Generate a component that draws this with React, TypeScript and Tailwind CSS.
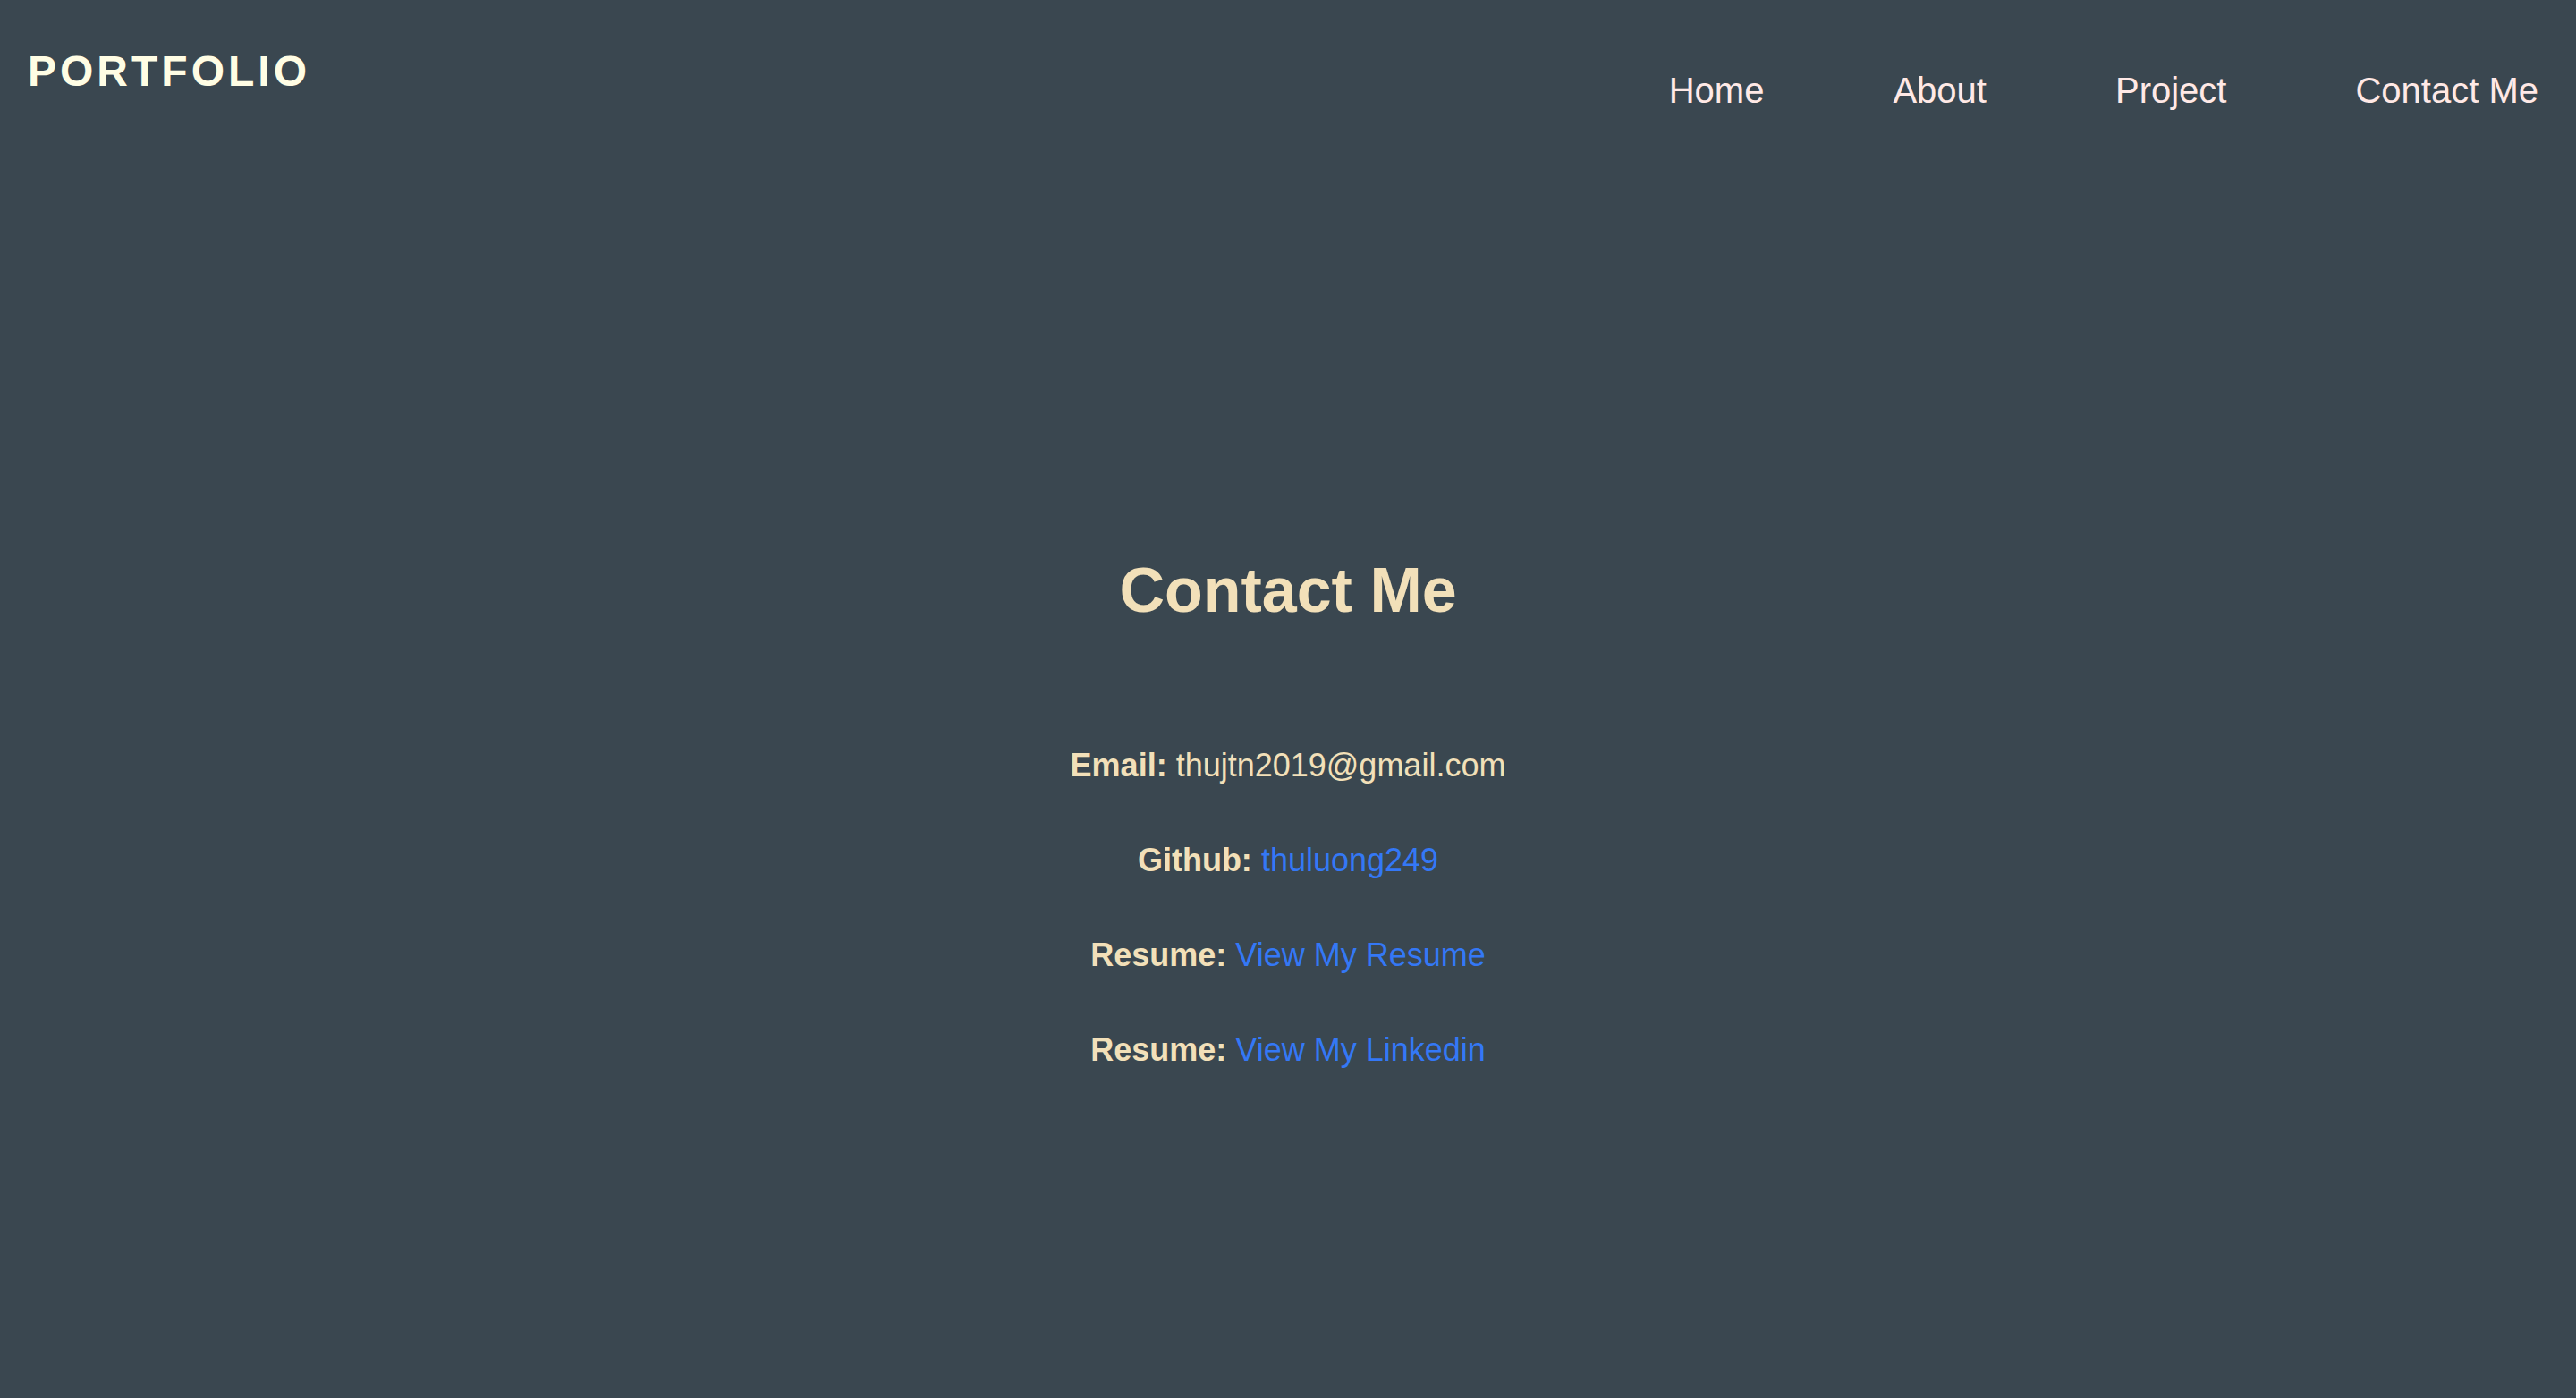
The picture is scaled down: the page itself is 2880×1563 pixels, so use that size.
const contacts = [
  { label: "Email:", value: "thujtn2019@gmail.com", link: false },
  { label: "Github:", value: "thuluong249", link: true },
  { label: "Resume:", value: "View My Resume", link: true },
  { label: "Resume:", value: "View My Linkedin", link: true },
];

const navItems = ["Home", "About", "Project", "Contact Me"];

export default function App() {
  return (
    <div className="min-h-screen bg-[#3a4750] font-['Liberation_Sans',Arial,sans-serif]">
      <header className="flex items-start justify-between">
        <a
          href="#"
          className="mt-[56px] pl-[31px] text-[48px] leading-none font-bold tracking-[4px] text-[#fffde4]"
        >
          PORTFOLIO
        </a>
        <ul className="mt-[81px] flex gap-[144px] pr-[42px] text-[40px] leading-none text-[#ffe9e6]">
          {navItems.map((item) => (
            <li key={item}>
              <a href="#">{item}</a>
            </li>
          ))}
        </ul>
      </header>

      <main className="flex flex-col items-center pt-[504px] pb-[200px] text-center">
        <h1 className="text-[70px] leading-none font-bold text-[#f2e0b9]">
          Contact Me
        </h1>
        <div className="mt-[143px] flex flex-col items-center gap-[70px] text-[36px] leading-none text-[#f2e0b9]">
          {contacts.map((c, i) => (
            <p key={i}>
              <span className="font-bold">{c.label}</span>{" "}
              {c.link ? (
                <a href="#" className="text-[#3478f6]">
                  {c.value}
                </a>
              ) : (
                <span>{c.value}</span>
              )}
            </p>
          ))}
        </div>
      </main>
    </div>
  );
}
